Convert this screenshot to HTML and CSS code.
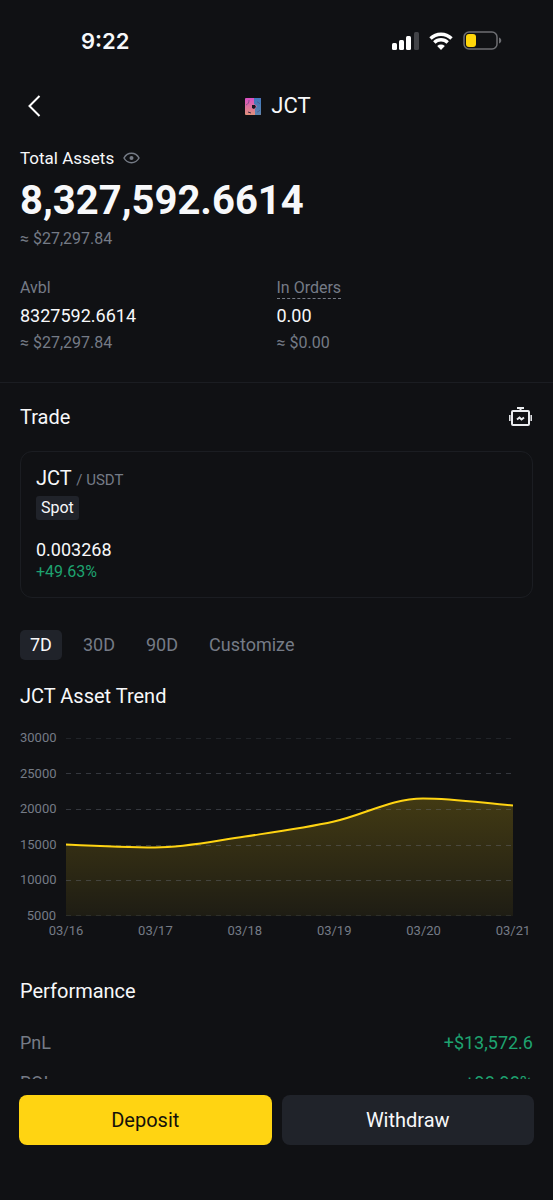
FILE: index.html
```html
<!doctype html>
<html lang="en">

<head>
    <meta charset="UTF-8" />
    <meta name="viewport" content="width=device-width, initial-scale=1.0" />
    <title>JCT</title>
    <link rel="stylesheet" href="styles.css">
</head>

<body>
    <div class="status">
        <span class="status__time">9:22</span>
        <div class="status__icons">
            <svg width="27" height="18" viewBox="0 0 27 18" fill="#fff">
                <rect x="0" y="11" width="5" height="7" rx="1.5" />
                <rect x="7" y="8" width="5" height="10" rx="1.5" />
                <rect x="14" y="4" width="5" height="14" rx="1.5" />
                <rect x="22" y="0" width="5" height="18" rx="1.5" fill="#424347" />
            </svg>
            <svg width="24" height="18" viewBox="0 0 24 18">
                <path d="M1.5 6.5a15 15 0 0 1 21 0M5.3 10.5a9.6 9.6 0 0 1 13.4 0" fill="none" stroke="#fff" stroke-width="3.4" />
                <path d="M12 18l-3.8-4a5.6 5.6 0 0 1 7.6 0z" fill="#fff" />
            </svg>
            <svg width="39" height="19" viewBox="0 0 39 19">
                <rect x="1" y="1" width="33" height="17" rx="5" fill="none" stroke="#6d6e72" stroke-width="1.5" />
                <rect x="3" y="3" width="10" height="13" rx="3" fill="#ffd60a" />
                <path d="M36 6.5c3 1 3 5 0 6z" fill="#6d6e72" />
            </svg>
        </div>
    </div>
    <header class="header">
        <button class="icon-button" aria-label="Back">
            <svg width="14" height="24" viewBox="0 0 14 24" fill="none" stroke="#fff" stroke-width="2">
                <path d="M12.5 2L2.5 12l10 10" />
            </svg>
        </button>
        <h1 class="heading">
            <svg width="16" height="17" viewBox="0 0 16 17">
                <defs>
                    <linearGradient id="coin-left" x1="0" y1="0" x2="0" y2="1">
                        <stop offset="0" stop-color="#d94fc4" />
                        <stop offset="1" stop-color="#e0917a" />
                    </linearGradient>
                    <linearGradient id="coin-right" x1="0" y1="0" x2="0" y2="1">
                        <stop offset="0" stop-color="#3f78bd" />
                        <stop offset="1" stop-color="#5c83ad" />
                    </linearGradient>
                </defs>
                <rect width="16" height="17" rx="1" fill="url(#coin-left)" />
                <path d="M9 0h6a1 1 0 0 1 1 1v15a1 1 0 0 1-1 1h-5v-6l2-3-3-2z" fill="url(#coin-right)" />
                <path d="M1 7c2-1 3-2 3-5M12 4c1 0 2 1 3 2M12 14c1 0 2-1 3-2" fill="none" stroke="#514478" stroke-opacity=".6" />
                <path d="M7 7h3l1 2-2 2-2-1z" fill="#17131f" />
                <path d="M3 14l3 1" stroke="#3b2740" />
            </svg>
            JCT
        </h1>
    </header>
    <main class="content">
        <section class="assets">
            <div class="assets__label">
                Total Assets
                <button class="icon-button" aria-label="Hide balance">
                    <svg width="17" height="12" viewBox="0 0 17 12">
                        <path d="M1 6C4.5-.3 12.5-.3 16 6c-3.5 6.3-11.5 6.3-15 0z" fill="none" stroke="#757b86" stroke-width="1.5" />
                        <circle cx="8.5" cy="6" r="2" fill="#757b86" />
                    </svg>
                </button>
            </div>
            <p class="assets__total">8,327,592.6614</p>
            <p class="muted">≈ $27,297.84</p>
            <div class="balances">
                <div>
                    <p class="muted">Avbl</p>
                    <p class="balances__value">8327592.6614</p>
                    <p class="muted">≈ $27,297.84</p>
                </div>
                <div>
                    <p class="muted"><span class="hint">In Orders</span></p>
                    <p class="balances__value">0.00</p>
                    <p class="muted">≈ $0.00</p>
                </div>
            </div>
        </section>
        <section class="trade">
            <div class="trade__header">
                <h2 class="title">Trade</h2>
                <button class="icon-button" aria-label="Trading bots">
                    <svg width="24" height="20" viewBox="0 0 24 20" fill="none" stroke="#eaecef" stroke-width="2">
                        <rect x="3" y="4" width="17" height="14" rx="1" />
                        <path d="M8 1h7M11.5 1v3" />
                        <path d="M.8 8v6M22.2 8v6" stroke-width="1.5" />
                        <path d="M8 12.5l2.5-2 2 2 2.5-2" />
                    </svg>
                </button>
            </div>
            <a class="pair" href="#">
                <span class="pair__name">JCT <small class="pair__quote">/ USDT</small></span>
                <span class="pair__tag">Spot</span>
                <span class="pair__price">0.003268</span>
                <span class="pair__change">+49.63%</span>
            </a>
        </section>
        <div class="tabs">
            <button class="tab-button tab-button--selected">7D</button>
            <button class="tab-button">30D</button>
            <button class="tab-button">90D</button>
            <button class="tab-button">Customize</button>
        </div>
        <section class="trend">
            <h2 class="title">JCT Asset Trend</h2>
            <div class="chart">
                <div class="chart__y">
                    <span>30000</span>
                    <span>25000</span>
                    <span>20000</span>
                    <span>15000</span>
                    <span>10000</span>
                    <span>5000</span>
                </div>
                <svg class="chart__plot" viewBox="0 0 447 178" preserveAspectRatio="none">
                    <defs>
                        <linearGradient id="area" x1="0" y1="60" x2="0" y2="178" gradientUnits="userSpaceOnUse">
                            <stop offset="0" stop-color="#ffd412" stop-opacity=".21" />
                            <stop offset="1" stop-color="#ffd412" stop-opacity=".06" />
                        </linearGradient>
                    </defs>
                    <path class="chart__area" d="M0 106.5C30 108 60 109.5 89 109.5C120 109.5 148 103 179 98.5C209 94 239 90 268 83.5C298 77 325 60.5 357 60.5C387 60.5 417 65 447 67.5V178H0z" />
                    <g class="chart__grid">
                        <path d="M0 .5H447" opacity=".5" />
                        <path d="M0 35.5H447M0 71.5H447M0 107.5H447M0 142.5H447" />
                        <path d="M0 177.5H447" opacity=".5" />
                    </g>
                    <path class="chart__line" d="M0 106.5C30 108 60 109.5 89 109.5C120 109.5 148 103 179 98.5C209 94 239 90 268 83.5C298 77 325 60.5 357 60.5C387 60.5 417 65 447 67.5" />
                </svg>
                <div class="chart__x">
                    <span>03/16</span>
                    <span>03/17</span>
                    <span>03/18</span>
                    <span>03/19</span>
                    <span>03/20</span>
                    <span>03/21</span>
                </div>
            </div>
        </section>
        <section class="performance">
            <h2 class="title">Performance</h2>
            <dl class="stats">
                <div class="stats__row">
                    <dt>PnL</dt>
                    <dd>+$13,572.6</dd>
                </div>
                <div class="stats__row">
                    <dt>ROI</dt>
                    <dd>+98.98%</dd>
                </div>
            </dl>
        </section>
    </main>
    <footer class="actions">
        <button class="action action--primary">Deposit</button>
        <button class="action">Withdraw</button>
    </footer>
</body>

</html>
```

FILE: styles.css
```css
:root {
    --background: #101114;
    --surface: #20232a;
    --border: #1b1d22;
    --text-color: #f7f8fa;
    --muted: #757b86;
    --green: #1ea370;
    --yellow: #ffd412;
}

* {
    margin: 0;
    padding: 0;
    box-sizing: border-box;
}

body {
    display: flex;
    flex-direction: column;
    height: 100vh;
    overflow: hidden;
    font-family: Roboto, sans-serif;
    font-size: 16px;
    line-height: 24px;
    color: var(--text-color);
    background: var(--background);
}

button {
    font: inherit;
    color: inherit;
    border: 0;
    background: none;
    cursor: pointer;
}

svg {
    display: block;
}

.status {
    display: flex;
    justify-content: space-between;
    align-items: center;
    flex: none;
    height: 81px;
    padding: 0 51px 0 81px;
}

.status__time {
    font-family: Inter, sans-serif;
    font-size: 22px;
    font-weight: 600;
}

.status__icons {
    display: flex;
    align-items: center;
    gap: 10px;
}

.header {
    display: grid;
    grid-template-columns: 24px 1fr 24px;
    align-items: center;
    flex: none;
    height: 50px;
    padding: 0 19px 0 22px;
}

.icon-button {
    display: flex;
    justify-content: center;
}

.heading {
    display: flex;
    justify-content: center;
    align-items: center;
    gap: 10px;
    font-size: 22px;
    font-weight: 400;
}

.content {
    flex: 1;
    min-height: 0;
    overflow: hidden;
}

.title {
    font-size: 20px;
    font-weight: 400;
}

.muted {
    color: var(--muted);
}

.assets {
    padding: 15px 20px 27px;
    border-bottom: 1px solid var(--border);
}

.assets__label {
    display: flex;
    align-items: center;
    gap: 9px;
    font-size: 17px;
}

.assets__total {
    margin-top: 4px;
    font-size: 40px;
    font-weight: 700;
    line-height: 53px;
}

.balances {
    display: grid;
    grid-template-columns: 1fr 1fr;
    margin-top: 25px;
}

.balances__value {
    font-size: 18px;
    line-height: 31px;
}

.hint {
    display: inline-block;
    line-height: 20px;
    border-bottom: 1px dashed;
}

.trade {
    padding: 22px 20px 0;
}

.trade__header {
    display: flex;
    justify-content: space-between;
    align-items: center;
}

.pair {
    display: flex;
    flex-direction: column;
    align-items: flex-start;
    margin-top: 22px;
    padding: 14px 15px 15px;
    border: 1px solid var(--border);
    border-radius: 12px;
    color: inherit;
    text-decoration: none;
}

.pair__name {
    font-size: 20px;
}

.pair__quote {
    font-size: 15px;
    color: var(--muted);
}

.pair__tag {
    margin-top: 4px;
    padding: 0 5px;
    border-radius: 3px;
    background: var(--surface);
}

.pair__price {
    margin-top: 18px;
    font-size: 18px;
}

.pair__change {
    line-height: 20px;
    color: var(--green);
}

.tabs {
    display: flex;
    gap: 11px;
    padding: 32px 20px 0;
}

.tab-button {
    padding: 3px 10px;
    border-radius: 5px;
    font-size: 18px;
    color: var(--muted);
}

.tab-button--selected {
    color: var(--text-color);
    background: var(--surface);
}

.trend {
    padding: 24px 20px 0;
}

.chart {
    display: grid;
    grid-template-columns: 36px 1fr;
    gap: 7px 10px;
    margin: 30px 20px 0 0;
    font-size: 13px;
    line-height: 16px;
    color: var(--muted);
}

.chart__y {
    display: flex;
    flex-direction: column;
    justify-content: space-between;
    margin: -8px 0;
    text-align: right;
}

.chart__plot {
    width: 100%;
    height: 178px;
    overflow: visible;
}

.chart__area {
    fill: url(#area);
}

.chart__grid {
    fill: none;
    stroke: #6b717c66;
    stroke-dasharray: 5 5;
}

.chart__line {
    fill: none;
    stroke: var(--yellow);
    stroke-width: 2;
    vector-effect: non-scaling-stroke;
}

.chart__x {
    grid-column: 2;
    display: flex;
    justify-content: space-between;
    margin: 0 -18px;
}

.chart__x span {
    width: 36px;
    text-align: center;
}

.performance {
    padding: 40px 20px 0;
}

.stats {
    margin-top: 20px;
    font-size: 18px;
}

.stats__row {
    display: flex;
    justify-content: space-between;
    line-height: 40px;
}

.stats dt {
    color: var(--muted);
}

.stats dd {
    color: var(--green);
}

.actions {
    display: grid;
    grid-template-columns: 1fr 1fr;
    gap: 10px;
    flex: none;
    padding: 16px 19px 55px;
}

.action {
    height: 50px;
    border-radius: 8px;
    font-size: 20px;
    background: var(--surface);
}

.action--primary {
    color: #14110a;
    background: var(--yellow);
}
```
